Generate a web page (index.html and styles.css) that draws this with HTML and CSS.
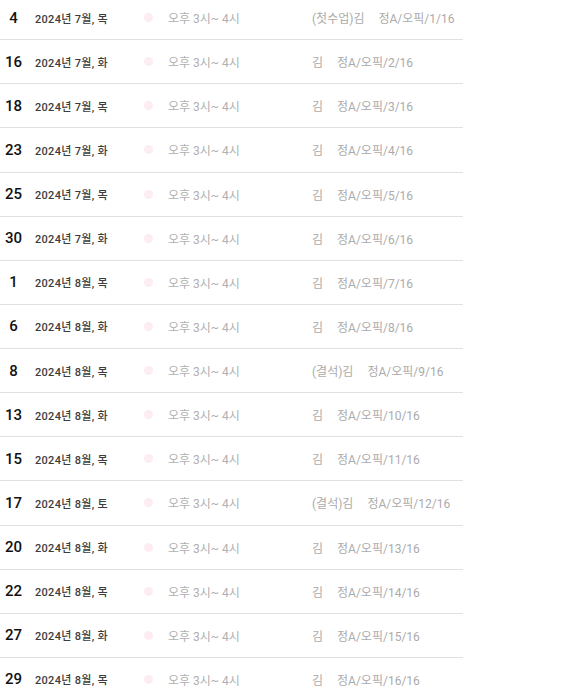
FILE: index.html
```html
<!DOCTYPE html>
<html lang="ko">
<head>
<meta charset="utf-8">
<title>수업 일정</title>
<link rel="stylesheet" href="styles.css">
</head>
<body>
<ul class="list">
  <li class="row"><span class="day">4</span><span class="date">2024년 7월, 목</span><span class="dot"></span><span class="time">오후 3시~ 4시</span><span class="who"><span class="name">(첫수업)김</span><span class="course">정A/오픽/1/16</span></span></li>
  <li class="row"><span class="day">16</span><span class="date">2024년 7월, 화</span><span class="dot"></span><span class="time">오후 3시~ 4시</span><span class="who"><span class="name">김</span><span class="course">정A/오픽/2/16</span></span></li>
  <li class="row"><span class="day">18</span><span class="date">2024년 7월, 목</span><span class="dot"></span><span class="time">오후 3시~ 4시</span><span class="who"><span class="name">김</span><span class="course">정A/오픽/3/16</span></span></li>
  <li class="row"><span class="day">23</span><span class="date">2024년 7월, 화</span><span class="dot"></span><span class="time">오후 3시~ 4시</span><span class="who"><span class="name">김</span><span class="course">정A/오픽/4/16</span></span></li>
  <li class="row"><span class="day">25</span><span class="date">2024년 7월, 목</span><span class="dot"></span><span class="time">오후 3시~ 4시</span><span class="who"><span class="name">김</span><span class="course">정A/오픽/5/16</span></span></li>
  <li class="row"><span class="day">30</span><span class="date">2024년 7월, 화</span><span class="dot"></span><span class="time">오후 3시~ 4시</span><span class="who"><span class="name">김</span><span class="course">정A/오픽/6/16</span></span></li>
  <li class="row"><span class="day">1</span><span class="date">2024년 8월, 목</span><span class="dot"></span><span class="time">오후 3시~ 4시</span><span class="who"><span class="name">김</span><span class="course">정A/오픽/7/16</span></span></li>
  <li class="row"><span class="day">6</span><span class="date">2024년 8월, 화</span><span class="dot"></span><span class="time">오후 3시~ 4시</span><span class="who"><span class="name">김</span><span class="course">정A/오픽/8/16</span></span></li>
  <li class="row"><span class="day">8</span><span class="date">2024년 8월, 목</span><span class="dot"></span><span class="time">오후 3시~ 4시</span><span class="who"><span class="name">(결석)김</span><span class="course">정A/오픽/9/16</span></span></li>
  <li class="row"><span class="day">13</span><span class="date">2024년 8월, 화</span><span class="dot"></span><span class="time">오후 3시~ 4시</span><span class="who"><span class="name">김</span><span class="course">정A/오픽/10/16</span></span></li>
  <li class="row"><span class="day">15</span><span class="date">2024년 8월, 목</span><span class="dot"></span><span class="time">오후 3시~ 4시</span><span class="who"><span class="name">김</span><span class="course">정A/오픽/11/16</span></span></li>
  <li class="row"><span class="day">17</span><span class="date">2024년 8월, 토</span><span class="dot"></span><span class="time">오후 3시~ 4시</span><span class="who"><span class="name">(결석)김</span><span class="course">정A/오픽/12/16</span></span></li>
  <li class="row"><span class="day">20</span><span class="date">2024년 8월, 화</span><span class="dot"></span><span class="time">오후 3시~ 4시</span><span class="who"><span class="name">김</span><span class="course">정A/오픽/13/16</span></span></li>
  <li class="row"><span class="day">22</span><span class="date">2024년 8월, 목</span><span class="dot"></span><span class="time">오후 3시~ 4시</span><span class="who"><span class="name">김</span><span class="course">정A/오픽/14/16</span></span></li>
  <li class="row"><span class="day">27</span><span class="date">2024년 8월, 화</span><span class="dot"></span><span class="time">오후 3시~ 4시</span><span class="who"><span class="name">김</span><span class="course">정A/오픽/15/16</span></span></li>
  <li class="row"><span class="day">29</span><span class="date">2024년 8월, 목</span><span class="dot"></span><span class="time">오후 3시~ 4시</span><span class="who"><span class="name">김</span><span class="course">정A/오픽/16/16</span></span></li>
</ul>
</body>
</html>
```
FILE: styles.css
```css
html, body {
  margin: 0;
  padding: 0;
  background: #ffffff;
  overflow: hidden;
}

body {
  font-family: Roboto, "Noto Sans CJK KR", "Noto Sans", sans-serif;
}

.list {
  list-style: none;
  margin: -4px 0 0 0;
  padding: 0;
  width: 463px;
}

.row {
  display: flex;
  align-items: center;
  height: 44.14px;
  box-sizing: border-box;
  border-bottom: 1px solid #e0e0e0;
}

.day {
  width: 27px;
  text-align: center;
  font-size: 15px;
  font-weight: 500;
  color: #111111;
}

.date {
  margin-left: 8px;
  width: 109px;
  font-size: 11px;
  font-weight: 500;
  color: #3c3c3c;
  letter-spacing: 0.3px;
}

.dot {
  width: 9px;
  height: 9px;
  border-radius: 50%;
  background: #fdedf1;
}

.time {
  margin-left: 15px;
  width: 144px;
  font-size: 12px;
  color: #b0b0b0;
}

.who {
  display: flex;
  font-size: 12px;
  color: #ababab;
}

.name {
  margin-right: 14px;
}
```
